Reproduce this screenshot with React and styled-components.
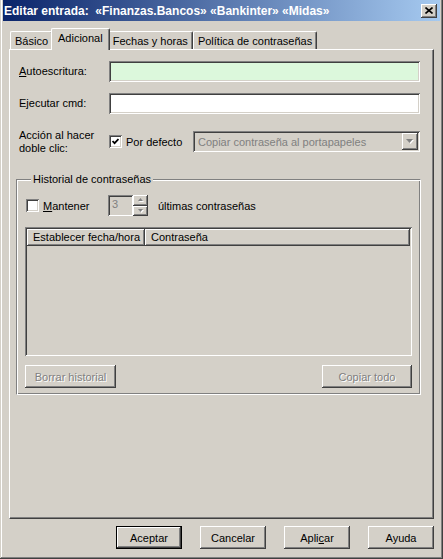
import React from 'react';
import styled, { createGlobalStyle, css } from 'styled-components';

const GlobalStyle = createGlobalStyle`
  html, body {
    margin: 0;
    padding: 0;
    background: #d4d0c8;
  }
  body {
    font-family: "Liberation Sans", Arial, sans-serif;
    font-size: 11px;
    color: #000;
  }
`;

const raised = css`
  box-shadow: inset -1px -1px #404040, inset 1px 1px #fff, inset -2px -2px #808080, inset 2px 2px #d4d0c8;
`;

const sunken = css`
  box-shadow: inset 1px 1px #808080, inset -1px -1px #fff, inset 2px 2px #404040, inset -2px -2px #d4d0c8;
`;

const disabledText = css`
  color: #808080;
  text-shadow: 1px 1px 0 #fff;
`;

const Window = styled.div`
  width: 443px;
  height: 559px;
  box-sizing: border-box;
  padding: 0 3px 3px 3px;
  background: #d4d0c8;
  box-shadow: inset -1px -1px #404040, inset 1px 0 #d4d0c8, inset -2px -2px #808080, inset 2px 0 #fff;
  display: flex;
  flex-direction: column;
`;

const TitleBar = styled.div`
  height: 21px;
  display: flex;
  align-items: center;
  justify-content: space-between;
  padding: 0 3px 0 1px;
  background: linear-gradient(to right, #0a246a, #a6caf0);
  color: #fff;
  font-size: 12px;
  font-weight: bold;
  white-space: pre;
`;

const CloseButton = styled.div`
  width: 16px;
  height: 14px;
  display: flex;
  align-items: center;
  justify-content: center;
  background: #d4d0c8;
  ${raised}
`;

const TabStrip = styled.div`
  display: flex;
  align-items: flex-end;
  height: 21px;
  margin-top: 7px;
  padding-left: 7px;
  position: relative;
  z-index: 1;
`;

const Tab = styled.div`
  height: ${({ $active }) => ($active ? 22 : 18)}px;
  margin: ${({ $active }) => ($active ? '0 -2px -1px -2px' : '0')};
  padding: ${({ $active }) => ($active ? '0 6px 3px' : '0 4px')};
  z-index: ${({ $active }) => ($active ? 2 : 1)};
  box-sizing: border-box;
  display: flex;
  align-items: center;
  background: #d4d0c8;
  border-top: 1px solid #fff;
  border-left: 1px solid #fff;
  border-right: 1px solid #404040;
  border-radius: 2px 2px 0 0;
  box-shadow: inset -1px 0 #808080;
  white-space: nowrap;
`;

const Panel = styled.div`
  height: 470px;
  margin: 0 6px;
  box-sizing: border-box;
  padding: 11px 13px 0 9px;
  border-top: 1px solid #fff;
  border-left: 1px solid #fff;
  border-right: 1px solid #404040;
  border-bottom: 1px solid #404040;
  box-shadow: inset -1px -1px #808080;
  display: flex;
  flex-direction: column;
`;

const Row = styled.div`
  display: flex;
  align-items: center;
  height: 21px;
  margin-bottom: ${({ $gap }) => $gap || 0}px;
`;

const FieldLabel = styled.label`
  width: 90px;
  flex: none;
  line-height: 13px;
`;

const TextInput = styled.div`
  flex: 1;
  height: 21px;
  background: ${({ $bg }) => $bg || '#fff'};
  ${sunken}
`;

const CheckBox = styled.span`
  width: 13px;
  height: 13px;
  flex: none;
  box-sizing: border-box;
  display: flex;
  align-items: center;
  justify-content: center;
  background: #fff;
  margin-left: ${({ $ml }) => $ml || 0}px;
  ${sunken}
`;

const CheckText = styled.span`
  margin-left: 4px;
  width: ${({ $w }) => ($w ? `${$w}px` : 'auto')};
`;

const Combo = styled.div`
  margin-left: auto;
  width: 227px;
  height: 21px;
  box-sizing: border-box;
  padding: 2px;
  display: flex;
  align-items: center;
  background: #d4d0c8;
  ${sunken}
`;

const ComboText = styled.span`
  flex: 1;
  padding-left: 3px;
  color: #808080;
  white-space: nowrap;
`;

const ComboButton = styled.span`
  width: 16px;
  height: 17px;
  display: flex;
  align-items: center;
  justify-content: center;
  ${raised}
`;

const Group = styled.fieldset`
  margin: 21px -1px 0 -3px;
  padding: 0 8px 6px 8px;
  border: 1px solid;
  border-color: #808080 #fff #fff #808080;
  box-shadow: inset 1px 1px #fff, inset -1px -1px #808080;
  min-inline-size: 0;
`;

const Legend = styled.legend`
  margin-left: 6px;
  padding: 0 2px;
  line-height: 13px;
  background: #d4d0c8;
`;

const KeepRow = styled.div`
  display: flex;
  align-items: center;
  height: 21px;
  margin-top: 9px;
`;

const Spin = styled.div`
  display: flex;
  height: 21px;
`;

const SpinEdit = styled.div`
  width: 25px;
  box-sizing: border-box;
  padding: 3px 0 0 4px;
  color: #808080;
  ${sunken}
`;

const SpinButtons = styled.div`
  width: 15px;
  display: flex;
  flex-direction: column;
`;

const SpinButton = styled.span`
  flex: 1;
  display: flex;
  align-items: center;
  justify-content: center;
  ${raised}
`;

const AfterSpin = styled.span`
  margin-left: 10px;
`;

const ListView = styled.div`
  margin-top: 11px;
  height: 129px;
  box-sizing: border-box;
  padding: 2px;
  background: #d4d0c8;
  ${sunken}
`;

const ListHeader = styled.div`
  display: flex;
  height: 17px;
`;

const HeaderCell = styled.div`
  width: ${({ $w }) => ($w ? `${$w}px` : 'auto')};
  flex: ${({ $w }) => ($w ? 'none' : 1)};
  box-sizing: border-box;
  padding: 2px 0 0 6px;
  white-space: nowrap;
  ${raised}
`;

const GroupButtons = styled.div`
  display: flex;
  justify-content: space-between;
  align-items: flex-start;
  margin-top: 9px;
`;

const Button = styled.div`
  width: ${({ $w }) => $w || 66}px;
  height: 23px;
  box-sizing: border-box;
  display: flex;
  align-items: center;
  justify-content: center;
  background: #d4d0c8;
  white-space: nowrap;
  ${raised}
  ${({ $disabled }) => $disabled && disabledText}
  ${({ $default }) =>
    $default &&
    css`
      box-shadow: inset 0 0 0 1px #000, inset -2px -2px #404040, inset 2px 2px #fff, inset -3px -3px #808080;
    `}
`;

const Footer = styled.div`
  display: flex;
  justify-content: flex-end;
  gap: 18px;
  padding: 7px 6px 0 0;
`;

const Arrow = ({ w = 7, h = 4, color = '#000', shadow }) => (
  <svg width={w + 1} height={h + 1} viewBox={`0 0 ${w + 1} ${h + 1}`}>
    {shadow && <polygon points={`1,1 ${w + 1},1 ${(w + 2) / 2},${h + 1}`} fill="#fff" />}
    <polygon points={`0,0 ${w},0 ${w / 2},${h}`} fill={color} />
  </svg>
);

const UpArrow = () => (
  <svg width="6" height="4" viewBox="0 0 6 4">
    <polygon points="1,4 6,4 3.5,1" fill="#fff" />
    <polygon points="0,3 5,3 2.5,0" fill="#808080" />
  </svg>
);

const tabs = ['Básico', 'Adicional', 'Fechas y horas', 'Política de contraseñas'];

const App = () => {
  return (
    <>
      <GlobalStyle />
      <Window>
        <TitleBar>
          <span>Editar entrada:  «Finanzas.Bancos» «Bankinter» «Midas»</span>
          <CloseButton>
            <svg width="8" height="7" viewBox="0 0 8 7">
              <path d="M0.5 0.5 L7.5 6.5 M7.5 0.5 L0.5 6.5" stroke="#000" strokeWidth="1.6" />
            </svg>
          </CloseButton>
        </TitleBar>

        <TabStrip>
          {tabs.map((t) => (
            <Tab key={t} $active={t === 'Adicional'}>{t}</Tab>
          ))}
        </TabStrip>

        <Panel>
          <Row $gap={11}>
            <FieldLabel><u>A</u>utoescritura:</FieldLabel>
            <TextInput $bg="#dcf8dc" />
          </Row>
          <Row $gap={17}>
            <FieldLabel>Ejecutar cmd:</FieldLabel>
            <TextInput />
          </Row>
          <Row>
            <FieldLabel>Acción al hacer<br />doble clic:</FieldLabel>
            <CheckBox>
              <svg width="7" height="7" viewBox="0 0 7 7">
                <path d="M0.5 3 L2.6 5.2 L6.5 1" stroke="#000" strokeWidth="1.8" fill="none" />
              </svg>
            </CheckBox>
            <CheckText>Por defecto</CheckText>
            <Combo>
              <ComboText>Copiar contraseña al portapapeles</ComboText>
              <ComboButton>
                <Arrow color="#808080" shadow />
              </ComboButton>
            </Combo>
          </Row>

          <Group>
            <Legend>Historial de contraseñas</Legend>
            <KeepRow>
              <CheckBox $ml={1} />
              <CheckText $w={65}><u>M</u>antener</CheckText>
              <Spin>
                <SpinEdit>3</SpinEdit>
                <SpinButtons>
                  <SpinButton><UpArrow /></SpinButton>
                  <SpinButton><Arrow w={5} h={3} color="#808080" shadow /></SpinButton>
                </SpinButtons>
              </Spin>
              <AfterSpin>últimas contraseñas</AfterSpin>
            </KeepRow>
            <ListView>
              <ListHeader>
                <HeaderCell $w={118}>Establecer fecha/hora</HeaderCell>
                <HeaderCell>Contraseña</HeaderCell>
              </ListHeader>
            </ListView>
            <GroupButtons>
              <Button $w={91} $disabled>Borrar historial</Button>
              <Button $w={90} $disabled>Copiar todo</Button>
            </GroupButtons>
          </Group>
        </Panel>

        <Footer>
          <Button $default>Aceptar</Button>
          <Button>Cancelar</Button>
          <Button>Apli<u>c</u>ar</Button>
          <Button>Ayuda</Button>
        </Footer>
      </Window>
    </>
  );
};

export default App;
